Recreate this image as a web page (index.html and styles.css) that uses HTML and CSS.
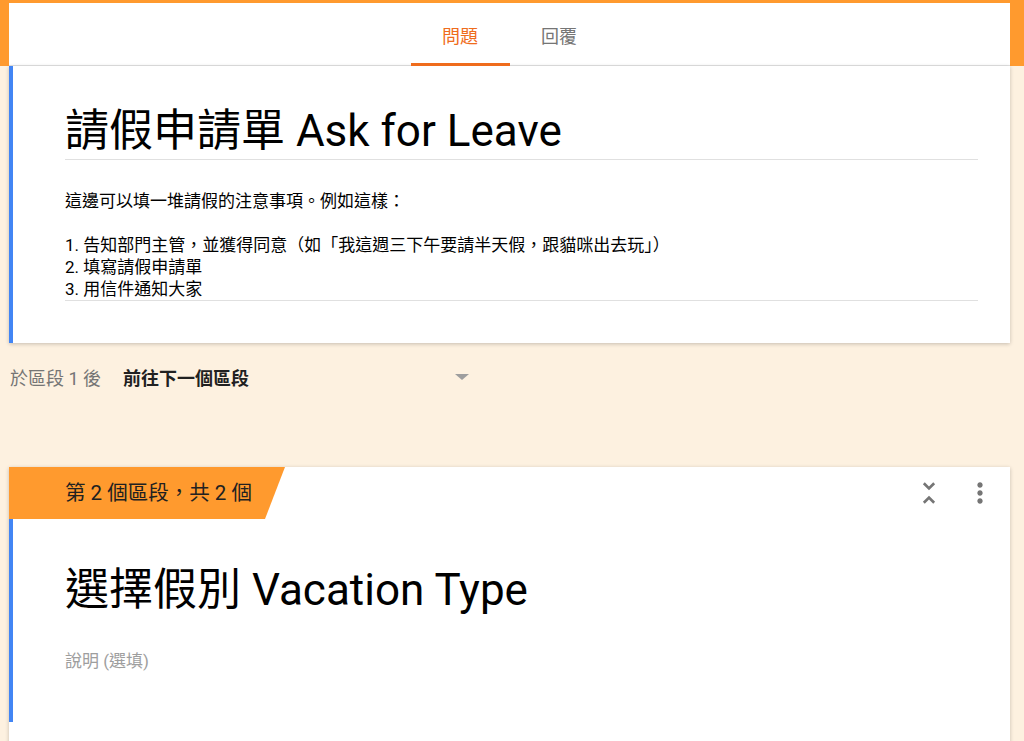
FILE: index.html
```html
<!DOCTYPE html>
<html lang="zh-Hant">
<head>
    <meta charset="UTF-8">
    <meta name="viewport" content="width=device-width, initial-scale=1.0">
    <title>請假申請單 Ask for Leave</title>
    <link rel="stylesheet" href="styles.css">
</head>
<body>
    <header class="topbar">
        <nav class="tabs">
            <a class="tab active">問題</a>
            <a class="tab">回覆</a>
        </nav>
    </header>

    <main class="page">
        <section class="card card-first">
            <h1 class="form-title">請假申請單 Ask for Leave</h1>
            <div class="form-desc">
                <p>這邊可以填一堆請假的注意事項。例如這樣：</p>
                <p>&nbsp;</p>
                <p>1. 告知部門主管，並獲得同意（如「我這週三下午要請半天假，跟貓咪出去玩」）</p>
                <p>2. 填寫請假申請單</p>
                <p>3. 用信件通知大家</p>
            </div>
        </section>

        <div class="after-section">
            <span class="after-label">於區段 1 後</span>
            <div class="goto-select">
                <span>前往下一個區段</span>
                <span class="caret"></span>
            </div>
        </div>

        <section class="card section-card">
            <div class="section-head">
                <span class="section-tag">第 2 個區段，共 2 個</span>
                <div class="tools">
                    <svg class="icon" viewBox="0 0 24 24"><path d="M7.41 18.59L8.83 20 12 16.83 15.17 20l1.41-1.41L12 14l-4.59 4.59zm9.18-13.18L15.17 4 12 7.17 8.83 4 7.41 5.41 12 10l4.59-4.59z"/></svg>
                    <svg class="icon" viewBox="0 0 24 24"><path d="M12 8c1.1 0 2-.9 2-2s-.9-2-2-2-2 .9-2 2 .9 2 2 2zm0 2c-1.1 0-2 .9-2 2s.9 2 2 2 2-.9 2-2-.9-2-2-2zm0 6c-1.1 0-2 .9-2 2s.9 2 2 2 2-.9 2-2-.9-2-2-2z"/></svg>
                </div>
            </div>
            <div class="section-body">
                <h2 class="form-title plain">選擇假別 Vacation Type</h2>
                <p class="placeholder">說明 (選填)</p>
            </div>
            <div class="section-rest"></div>
        </section>
    </main>
</body>
</html>
```

FILE: styles.css
```css
/* Base */
body {
    margin: 0;
    background-color: #fdf1e0;
    font-family: Roboto, "Noto Sans CJK TC", sans-serif;
    color: #212121;
    overflow: hidden;
}

/* Top tab bar */
.topbar {
    background-color: #ff9a2e;
    padding: 3px 14px 0 9px;
}

.tabs {
    background: #fff;
    height: 63px;
    display: flex;
    justify-content: center;
    border-bottom: 1px solid #e3e3e3;
    box-sizing: border-box;
}

.tab {
    width: 99px;
    display: flex;
    align-items: center;
    justify-content: center;
    padding-top: 4px;
    font-size: 18px;
    color: #757575;
    border-bottom: 3px solid transparent;
    margin-bottom: -1px;
}

.tab.active {
    color: #ef6c1c;
    border-bottom-color: #ef6c1c;
}

/* Cards */
.page {
    padding: 0 14px 0 9px;
}

.card {
    background: #fff;
    box-shadow: 0 1px 4px rgba(0, 0, 0, 0.22);
}

.card-first {
    border-left: 4px solid #4285f4;
    padding: 37px 32px 42px 52px;
}

.form-title {
    margin: 0;
    font-size: 44px;
    font-weight: 400;
    line-height: 56px;
    color: #000;
    border-bottom: 1px solid #e0e0e0;
}

.form-title.plain {
    border-bottom: none;
}

.form-desc {
    margin-top: 30px;
    font-size: 17px;
    line-height: 22px;
    color: #000;
    border-bottom: 1px solid #e0e0e0;
}

.form-desc p {
    margin: 0;
}

/* After section row */
.after-section {
    display: flex;
    align-items: center;
    margin-top: 24px;
    padding-left: 1px;
    font-size: 18px;
    line-height: 24px;
}

.after-label {
    color: #757575;
    width: 113px;
}

.goto-select {
    display: flex;
    align-items: center;
    width: 346px;
    justify-content: space-between;
    font-weight: 700;
    color: #212121;
}

.caret {
    width: 0;
    height: 0;
    border-left: 7px solid transparent;
    border-right: 7px solid transparent;
    border-top: 6px solid #9e9e9e;
    margin-top: -4px;
}

/* Section 2 */
.section-card {
    margin-top: 76px;
}

.section-head {
    display: flex;
    justify-content: space-between;
    align-items: center;
    height: 52px;
}

.section-tag {
    width: 220px;
    height: 52px;
    line-height: 52px;
    padding-left: 56px;
    background: #ff9a2e;
    font-size: 20.5px;
    color: #212121;
    clip-path: polygon(0 0, 100% 0, calc(100% - 20px) 100%, 0 100%);
}

.tools {
    display: flex;
    gap: 19px;
    padding-right: 14px;
}

.icon {
    width: 32px;
    height: 32px;
    fill: #757575;
}

.section-body {
    border-left: 4px solid #4285f4;
    padding: 43px 32px 50px 52px;
}

.placeholder {
    margin: 32px 0 0;
    font-size: 17px;
    line-height: 22px;
    color: #9e9e9e;
}

.section-rest {
    height: 40px;
}
```
